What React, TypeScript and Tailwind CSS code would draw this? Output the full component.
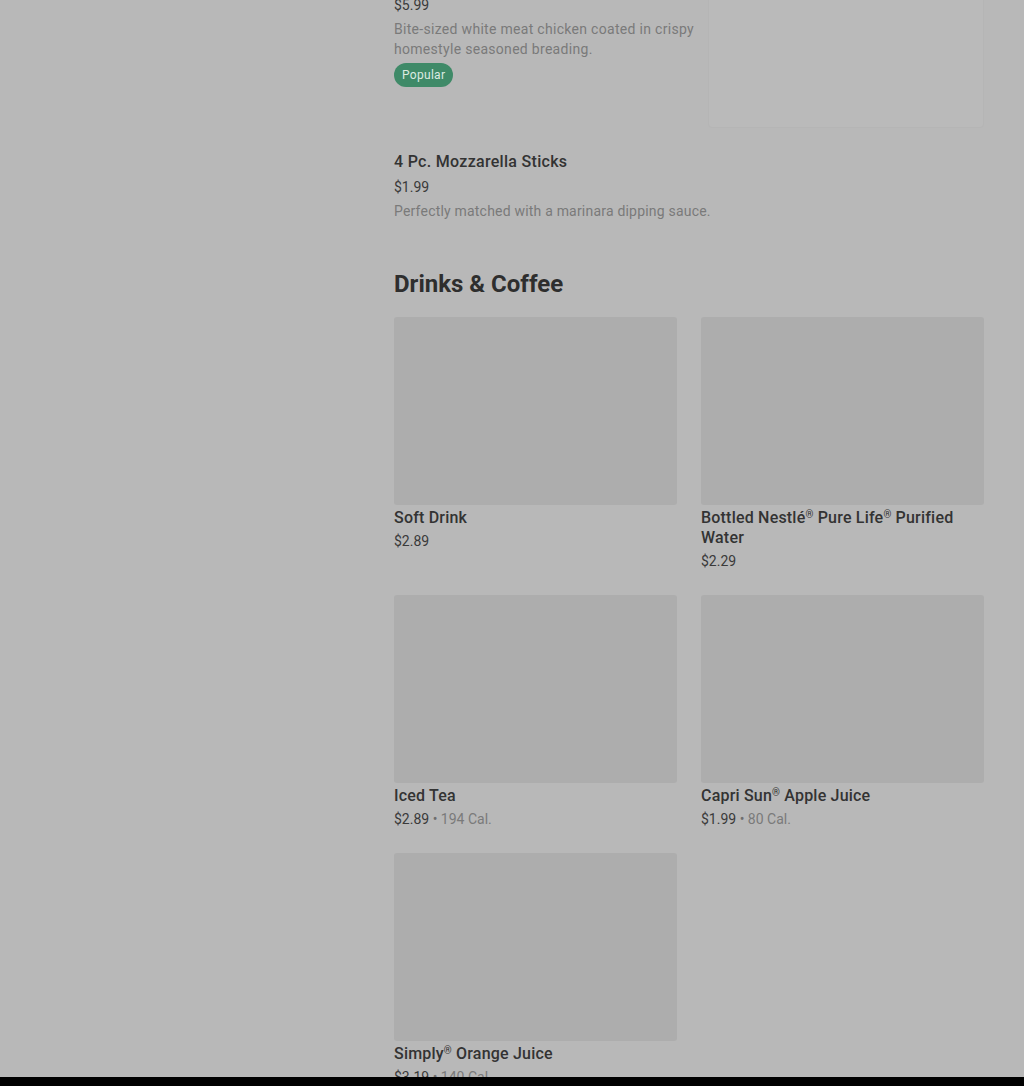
import React from 'react';

interface Drink {
  name: string;
  price: string;
  cal?: string;
}

const drinks: Drink[] = [
  { name: 'Soft Drink', price: '$2.89' },
  { name: 'Bottled Nestlé® Pure Life® Purified Water', price: '$2.29' },
  { name: 'Iced Tea', price: '$2.89', cal: '194 Cal.' },
  { name: 'Capri Sun® Apple Juice', price: '$1.99', cal: '80 Cal.' },
  { name: 'Simply® Orange Juice', price: '$3.19', cal: '140 Cal.' },
];

// small raised ® like the menu font renders it
const withMarks = (name: string) =>
  name.split('®').map((part, i, arr) => (
    <React.Fragment key={i}>
      {part}
      {i < arr.length - 1 && <span className="relative -top-[5px] text-[10px] leading-none">®</span>}
    </React.Fragment>
  ));

const DrinkCard: React.FC<{ item: Drink }> = ({ item }) => (
  <div className="flex flex-col">
    <div className="h-[188px] w-full rounded-[3px] bg-[#adadad]" />
    <p className="mt-[3px] text-[16px] leading-5 font-medium tracking-[0.2px] text-[#333333]">{withMarks(item.name)}</p>
    <p className="mt-[3px] text-[14px] leading-5 text-[#3a3a3a]">
      {item.price}
      {item.cal && (
        <>
          <span className="text-[#6e6e6e]"> • </span>
          <span className="text-[#7a7a7a]">{item.cal}</span>
        </>
      )}
    </p>
  </div>
);

export default function App() {
  return (
    <div
      className="flex h-[1086px] w-full flex-col overflow-hidden bg-[#b8b8b8]"
      style={{ fontFamily: 'Roboto, "Liberation Sans", sans-serif' }}
    >
      <div className="flex-1 overflow-hidden">
        <div className="ml-[394px] mr-[40px]">
          {/* chicken item, cut off at the top */}
          <div className="-mt-[32px] flex justify-between">
            <div className="w-[306px] pt-[3px]">
              <p className="text-[16px] leading-6 font-medium text-[#333333]">Chicken Nuggets</p>
              <p className="text-[14px] leading-5 text-[#3a3a3a]">$5.99</p>
              <p className="mt-1 text-[14px] leading-5 tracking-[0.3px] text-[#7a7a7a]">
                Bite-sized white meat chicken coated in crispy homestyle seasoned breading.
              </p>
              <span className="mt-1 inline-flex h-6 items-center rounded-full bg-[#3f8a68] px-2 text-[12px] tracking-[0.3px] text-[#dcebe2]">
                Popular
              </span>
            </div>
            <div className="h-[160px] w-[276px] rounded-[4px] border border-[#b5b5b5] bg-[#bababa]" />
          </div>

          {/* mozzarella sticks */}
          <div className="pt-[22px]">
            <p className="text-[16px] leading-6 font-medium tracking-[0.3px] text-[#333333]">4 Pc. Mozzarella Sticks</p>
            <p className="mt-[3px] text-[14px] leading-5 text-[#3a3a3a]">$1.99</p>
            <p className="mt-1 text-[14px] leading-5 tracking-[0.2px] text-[#7a7a7a]">
              Perfectly matched with a marinara dipping sauce.
            </p>
          </div>

          <h2 className="mt-[47px] text-[24px] leading-8 font-bold text-[#2e2e2e]">Drinks &amp; Coffee</h2>

          <div className="mt-[17px] grid grid-cols-2 gap-x-6 gap-y-6">
            {drinks.map((d) => (
              <DrinkCard key={d.name} item={d} />
            ))}
          </div>
        </div>
      </div>
      <div className="h-[9px] bg-black" />
    </div>
  );
}
